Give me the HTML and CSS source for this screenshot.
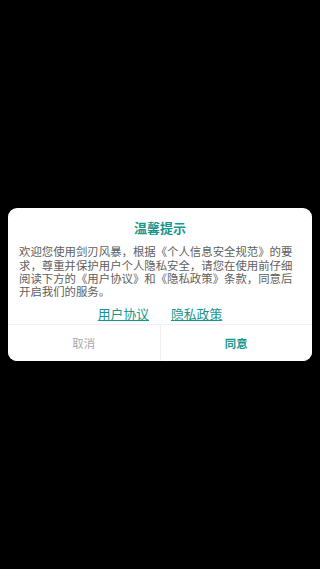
FILE: index.html
```html
<!DOCTYPE html>
<html lang="zh">
<head>
  <meta charset="UTF-8" />
  <meta name="viewport" content="width=device-width, initial-scale=1.0"/>
  <title>温馨提示</title>
  <link rel="stylesheet" href="styles.css">
</head>
<body>

  <!-- Datenschutz Dialog -->
  <div class="dialog">
    <h2>温馨提示</h2>
    <p class="text">欢迎您使用剑刃风暴，根据《个人信息安全规范》的要求，尊重并保护用户个人隐私安全，请您在使用前仔细阅读下方的《用户协议》和《隐私政策》条款，同意后开启我们的服务。</p>
    <div class="links">
      <a href="#">用户协议</a>
      <a href="#">隐私政策</a>
    </div>
    <div class="buttons">
      <button class="cancel">取消</button>
      <button class="ok">同意</button>
    </div>
  </div>

</body>
</html>
```

FILE: styles.css
```css
html, body {
  height: 100%;
}
body {
  font-family: "Noto Sans CJK SC", "Noto Sans", sans-serif;
  background-color: #000;
  margin: 0;
  padding: 0 8px;
  display: flex;
  align-items: center;
}
.dialog {
  flex: 1;
  background: #fff;
  border-radius: 9px;
  overflow: hidden;
}
.dialog h2 {
  margin: 11px 0 0;
  font-size: 13px;
  line-height: 18px;
  text-align: center;
  color: #17968e;
  font-weight: bold;
}
.text {
  margin: 8px 11px 0;
  font-size: 11.4px;
  line-height: 13.3px;
  color: #606060;
}
.links {
  display: flex;
  justify-content: center;
  gap: 22px;
  margin-top: 6px;
  height: 19px;
}
.links a {
  font-size: 12.8px;
  line-height: 18px;
  color: #17968e;
  text-decoration: underline;
}
.buttons {
  display: flex;
  border-top: 1px solid #f0f0f0;
}
button {
  flex: 1;
  height: 36px;
  background: #fff;
  border: none;
  font-family: inherit;
  font-size: 11.4px;
  padding: 0;
  cursor: pointer;
}
.cancel {
  color: #a8a8a8;
  border-right: 1px solid #f0f0f0;
}
.ok {
  color: #17968e;
  font-weight: bold;
}
```
